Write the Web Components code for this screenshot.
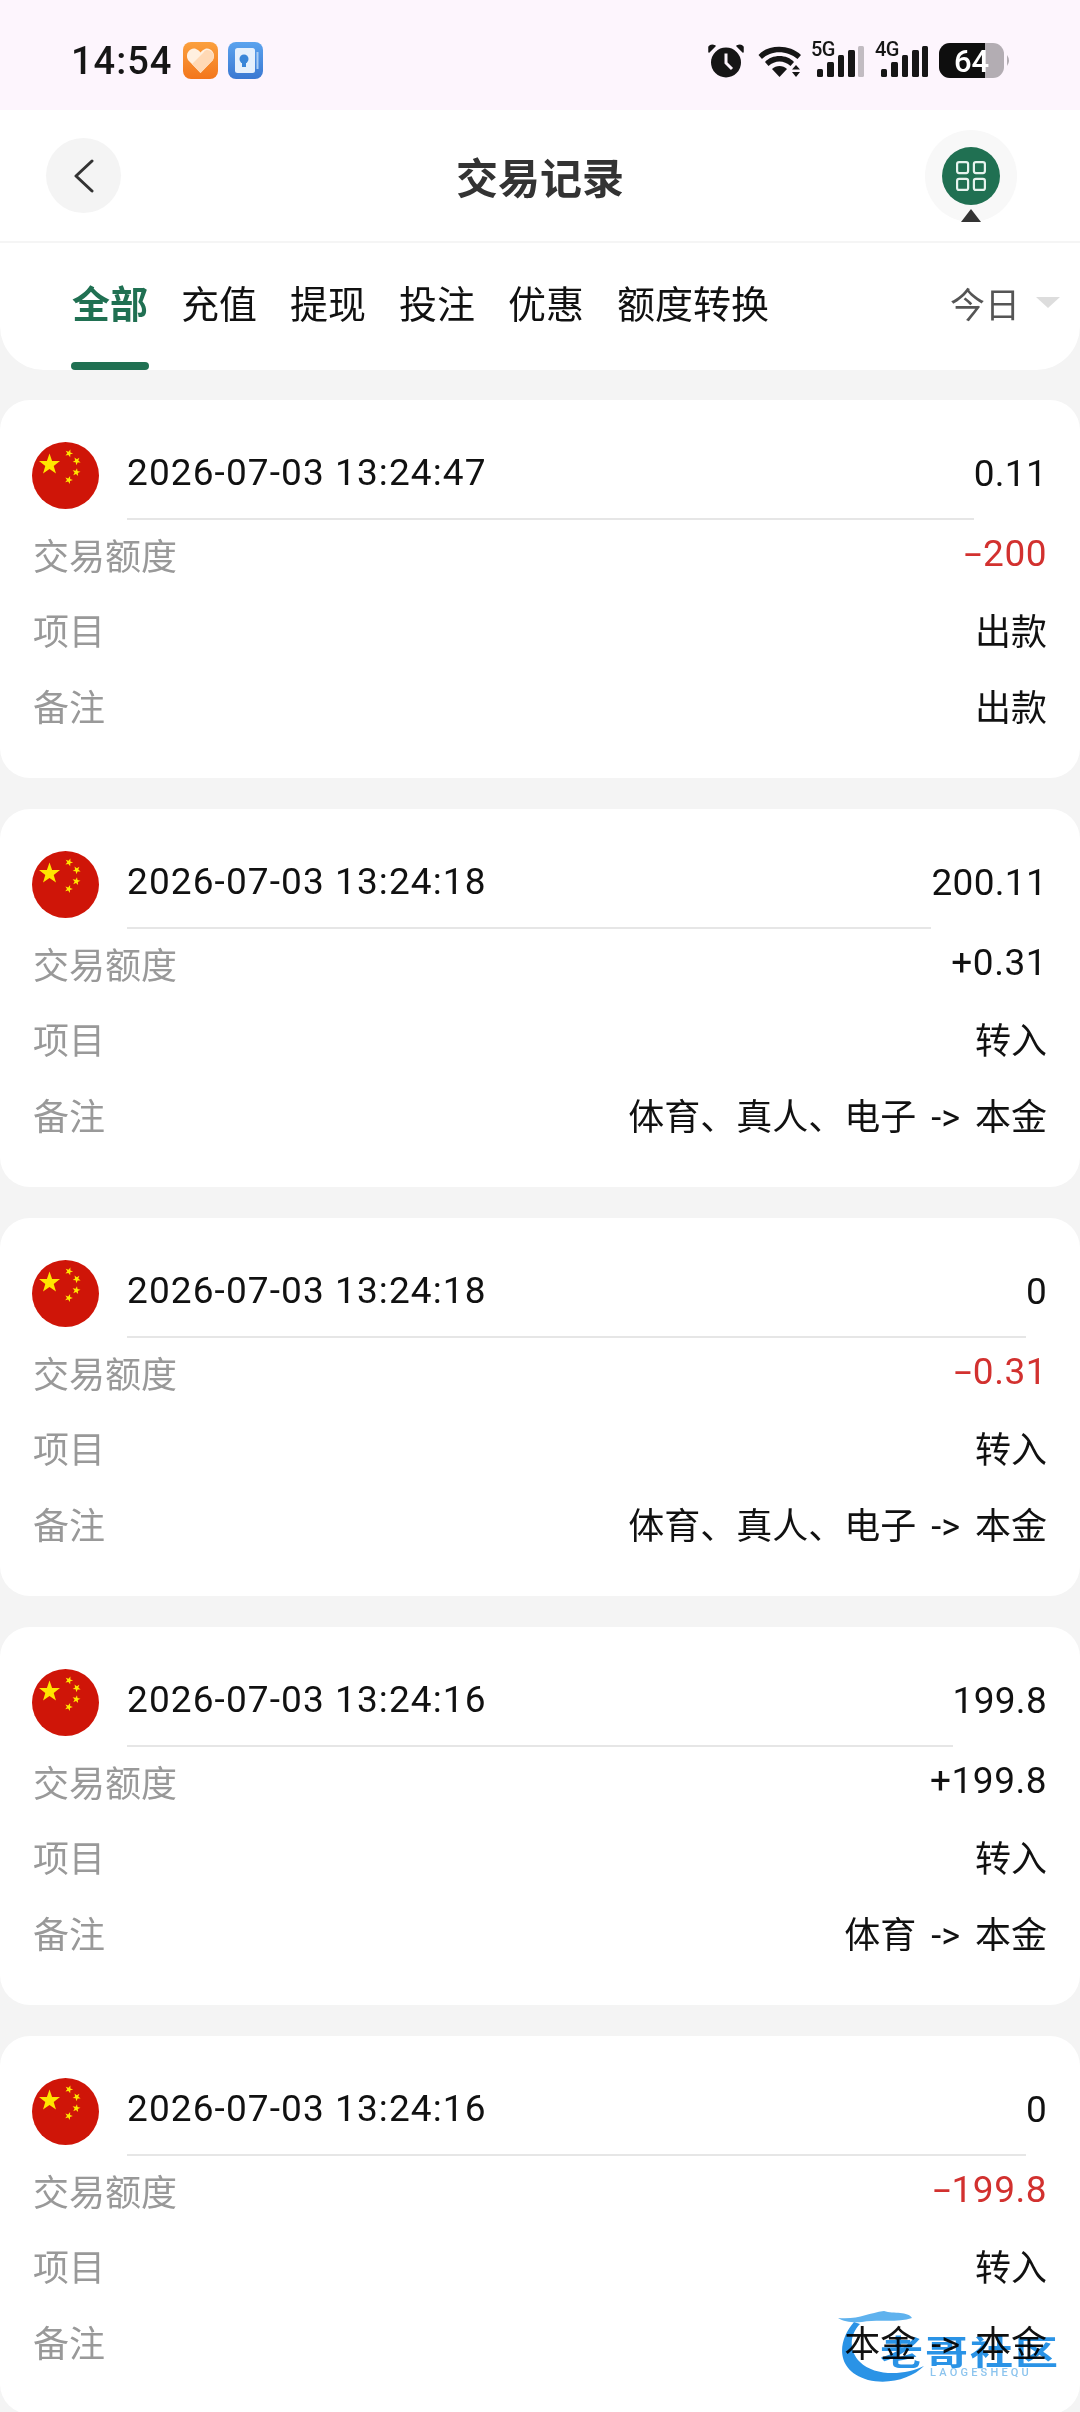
<!DOCTYPE html>
<html lang="zh">
<head>
<meta charset="utf-8">
<title>交易记录</title>
<style>
  html, body { margin: 0; padding: 0; }
  body {
    width: 1080px;
    height: 2412px;
    overflow: hidden;
    background: #f4f4f4;
    font-family: Roboto, "Noto Sans CJK SC", sans-serif;
  }
</style>
</head>
<body>
<status-bar></status-bar>
<app-header>交易记录</app-header>
<tab-bar></tab-bar>
<record-list>
  <record-card time="2026-07-03 13:24:47" balance="0.11" amount="-200" kind="neg" item="出款" note="出款"></record-card>
  <record-card time="2026-07-03 13:24:18" balance="200.11" amount="+0.31" item="转入" note="体育、真人、电子 -&gt; 本金"></record-card>
  <record-card time="2026-07-03 13:24:18" balance="0" amount="-0.31" kind="neg" item="转入" note="体育、真人、电子 -&gt; 本金"></record-card>
  <record-card time="2026-07-03 13:24:16" balance="199.8" amount="+199.8" item="转入" note="体育 -&gt; 本金"></record-card>
  <record-card time="2026-07-03 13:24:16" balance="0" amount="-199.8" kind="neg" item="转入" note="本金 -&gt; 本金"></record-card>
</record-list>
<water-mark></water-mark>

<script>
class StatusBar extends HTMLElement {
  constructor() {
    super();
    this.shadowDOM = this.attachShadow({mode: 'open'});
    const bars = (last) => `
      <svg width="53" height="36" viewBox="0 0 53 36">
        <rect x="6" y="26" width="6" height="8" rx="1.500" fill="#161616"/><rect x="16" y="19" width="7" height="15" rx="1.500" fill="#161616"/><rect x="27" y="12" width="6" height="22" rx="1.500" fill="#161616"/><rect x="37" y="7" width="7" height="27" rx="1.500" fill="#161616"/><rect x="47" y="3" width="6" height="31" rx="1.500" fill="${last}"/>
      </svg>`;
    this.shadowDOM.innerHTML = `
      <style>
        :host {
          display: flex;
          align-items: center;
          height: 110px;
          padding: 11px 69px 0 71px;
          box-sizing: border-box;
          background: #fdf5fd;
          color: #161616;
        }
        .time { font: 500 38px/1 Roboto, sans-serif; letter-spacing: 1px; margin-right: 11px; }
        .apps { display: flex; gap: 10px; }
        .right { margin-left: auto; display: flex; align-items: center; }
        svg { display: block; }
        .net { position: relative; width: 53px; height: 36px; margin-right: 11px; }
        .net b { position: absolute; left: 0; top: -4px; font: 500 20px/1 Roboto, sans-serif; letter-spacing: -.5px; }
      </style>
      <span class="time">14:54</span>
      <div class="apps">
        <svg width="35" height="37" viewBox="0 0 35 37">
          <defs><linearGradient id="o" x1="0" y1="0" x2="0" y2="1"><stop offset="0" stop-color="#fba03e"/><stop offset="1" stop-color="#f3761c"/></linearGradient></defs>
          <rect width="35" height="37" rx="8" fill="url(#o)"/>
          <path d="M17.500 31 L5 18 C1.500 11 8 5 13 7 C15 7.800 16.500 9 17.500 10.500 C18.500 9 20 7.800 22 7 C27 5 33.500 11 30 18 Z" fill="#fff0e0"/>
          <path d="M17.500 31 L9 22 L21 10 C23 5.500 33.500 9 30 18 Z" fill="#ffd9b5"/>
        </svg>
        <svg width="35" height="37" viewBox="0 0 35 37">
          <defs><linearGradient id="b" x1="0" y1="0" x2="0" y2="1"><stop offset="0" stop-color="#5ba3ee"/><stop offset="1" stop-color="#3a78d2"/></linearGradient></defs>
          <rect width="35" height="37" rx="8" fill="url(#b)"/>
          <rect x="7" y="6" width="20" height="25" rx="2.500" fill="#e6f0fc"/>
          <rect x="28.500" y="10" width="2" height="17" fill="#a9cdf5"/>
          <circle cx="16" cy="17" r="4.500" fill="#3a86d8"/>
          <path d="M14 21h4v4h-4z" fill="#3a86d8"/>
        </svg>
      </div>
      <div class="right">
        <svg width="36" height="34" viewBox="0 0 36 34" style="margin-right:13px">
          <circle cx="18" cy="18.500" r="15" fill="#161616"/>
          <path d="M18 9.500 V19 L24 25" fill="none" stroke="#fdf5fd" stroke-width="3"/>
          <path d="M1 8 L7 2 Q3 0 1 3 Z M35 8 L29 2 Q33 0 35 3 Z" fill="#161616" stroke="#161616" stroke-width="1.500" stroke-linejoin="round"/>
        </svg>
        <svg width="46" height="34" viewBox="0 0 46 34" style="margin-right:8px">
          <path d="M1.500 11 C11 0 33 0 44 11 L40.500 15 C30 6 14 6 5 15 Z" fill="#161616"/>
          <path d="M8 18 C15 10 30 10 37 18 L33.500 22 C27 16 18 16 11.500 22 Z" fill="#161616"/>
          <path d="M15 25 C19 21 26 21 30 25 L22.500 33 Z" fill="#161616"/>
          <path d="M39 21 L43 25.500 H35 Z M39 33 L35 28 H43 Z" fill="#161616"/>
        </svg>
        <div class="net"><b>5G</b>${bars('#c2bcc2')}</div>
        <div class="net"><b>4G</b>${bars('#161616')}</div>
        <svg width="72" height="36" viewBox="0 0 72 36">
          <defs><clipPath id="bat"><rect width="65" height="35" rx="11"/></clipPath></defs>
          <g clip-path="url(#bat)"><rect width="65" height="35" fill="#b3adb3"/><rect width="46" height="35" fill="#0e0e0e"/></g>
          <path d="M68 12 Q72 17.500 68 23 Z" fill="#b3adb3"/>
          <text x="15" y="29" font-family="Roboto, sans-serif" font-size="31" font-weight="500" fill="#fff">64</text>
        </svg>
      </div>
    `;
  }
}

class AppHeader extends HTMLElement {
  constructor() {
    super();
    this.shadowDOM = this.attachShadow({mode: 'open'});
    this.shadowDOM.innerHTML = `
      <style>
        :host {
          display: grid;
          grid-template-columns: 1fr auto 1fr;
          align-items: center;
          height: 133px;
          padding: 0 46px;
          box-sizing: border-box;
          background: #fff;
          border-bottom: 2px solid #f5f5f5;
        }
        .back {
          width: 75px;
          height: 75px;
          border-radius: 50%;
          background: #f4f4f4;
          display: flex;
          align-items: center;
          justify-content: center;
        }
        h1 {
          margin: 0;
          font: 700 42px/1 "Noto Sans CJK SC", sans-serif;
          color: #333;
        }
        .menu {
          justify-self: end;
          margin-right: 17px;
          position: relative;
          width: 92px;
          height: 92px;
          border-radius: 50%;
          background: #f8f8f8;
          display: flex;
          align-items: center;
          justify-content: center;
        }
        .dot {
          width: 58px;
          height: 58px;
          border-radius: 50%;
          background: #207052;
          display: flex;
          align-items: center;
          justify-content: center;
        }
        .arrow {
          position: absolute;
          left: 36px;
          bottom: 0;
          width: 0;
          height: 0;
          border: 10px solid transparent;
          border-top: 0;
          border-bottom: 13px solid #333;
        }
      </style>
      <div class="back">
        <svg width="22" height="34" viewBox="0 0 22 34"><path d="M19 2 L3 17 L19 32" fill="none" stroke="#333" stroke-width="3" stroke-linecap="round" stroke-linejoin="round"/></svg>
      </div>
      <h1><slot></slot></h1>
      <div class="menu">
        <div class="dot">
          <svg width="30" height="30" viewBox="0 0 30 30" fill="none" stroke="#e6f3ee" stroke-width="2.200">
            <rect x="1.100" y="1.100" width="11" height="11" rx="2"/><rect x="17.900" y="1.100" width="11" height="11" rx="2"/>
            <rect x="1.100" y="17.900" width="11" height="11" rx="2"/><rect x="17.900" y="17.900" width="11" height="11" rx="2"/>
          </svg>
        </div>
        <i class="arrow"></i>
      </div>
    `;
  }
}

class TabBar extends HTMLElement {
  constructor() {
    super();
    this.shadowDOM = this.attachShadow({mode: 'open'});
    const tabs = ['全部', '充值', '提现', '投注', '优惠', '额度转换'];
    this.shadowDOM.innerHTML = `
      <style>
        :host {
          display: flex;
          align-items: stretch;
          height: 127px;
          padding: 0 20px 0 72px;
          box-sizing: border-box;
          background: #fff;
          border-radius: 0 0 44px 44px;
          font-family: "Noto Sans CJK SC", sans-serif;
        }
        .tabs { display: flex; gap: 33px; }
        .tab {
          position: relative;
          font-size: 38px;
          line-height: 1;
          color: #111;
          padding-top: 40px;
        }
        .tab.on { color: #207052; font-weight: 700; }
        .tab.on::after {
          content: "";
          position: absolute;
          left: -1px;
          right: -1px;
          bottom: 0;
          height: 8px;
          border-radius: 4px;
          background: #207052;
        }
        .range {
          margin-left: auto;
          display: flex;
          align-items: center;
          gap: 16px;
          height: 118px;
          font-size: 35px;
          color: #555;
        }
        .range i {
          width: 0;
          height: 0;
          border: 12px solid transparent;
          border-bottom: 0;
          border-top: 11px solid #ddd;
        }
      </style>
      <div class="tabs">
        ${tabs.map((t, i) => `<span class="tab${i === 0 ? ' on' : ''}">${t}</span>`).join('')}
      </div>
      <div class="range">今日<i></i></div>
    `;
  }
}

class RecordList extends HTMLElement {
  constructor() {
    super();
    this.shadowDOM = this.attachShadow({mode: 'open'});
    this.shadowDOM.innerHTML = `
      <style>
        :host {
          display: flex;
          flex-direction: column;
          gap: 31px;
          padding-top: 30px;
        }
      </style>
      <slot></slot>
    `;
  }
}

// five point star around cx,cy, for the flag
const star = (cx, cy, r, rot) => {
  const pts = [];
  for (let i = 0; i < 10; i++) {
    const a = (rot + i * 36 - 90) * Math.PI / 180;
    const d = i % 2 ? r * 0.4 : r;
    pts.push((cx + d * Math.cos(a)).toFixed(1) + ',' + (cy + d * Math.sin(a)).toFixed(1));
  }
  return `<polygon points="${pts.join(' ')}"/>`;
};

class RecordCard extends HTMLElement {
  constructor() {
    super();
    this.shadowDOM = this.attachShadow({mode: 'open'});
  }

  connectedCallback() {
    const get = (n) => (this.getAttribute(n) || '').replace('->', '-&gt;');
    const neg = this.getAttribute('kind') === 'neg';
    const amount = neg ? `<i class="sign">-</i>${get('amount').slice(1)}` : get('amount');
    this.shadowDOM.innerHTML = `
      <style>
        :host {
          display: block;
          height: 378px;
          padding: 42px 33px 0 32px;
          box-sizing: border-box;
          background: #fff;
          border-radius: 30px;
          font-family: Roboto, "Noto Sans CJK SC", sans-serif;
        }
        .top { display: flex; align-items: flex-start; height: 74px; }
        .top svg { flex: none; margin-right: 28px; display: block; }
        .mid {
          flex: 1;
          height: 78px;
          font-size: 37px;
          line-height: 62px;
          letter-spacing: 1.100px;
          color: #111;
          border-bottom: 2px solid #e6e6e6;
          box-sizing: border-box;
        }
        .bal { font-size: 37px; line-height: 64px; letter-spacing: .3px; color: #111; }
        .row {
          display: flex;
          justify-content: space-between;
          align-items: center;
          height: 75.500px;
          font-size: 36px;
          color: #111;
        }
        .row span:first-child { color: #999; margin-left: 1px; }
        .row span:last-child { word-spacing: 6px; }
        .amt { font-size: 37px; letter-spacing: .5px; }
        .neg { color: #d2312f; }
        .sign { display: inline-block; font-style: normal; transform: scaleX(1.7); margin: 0 4px; }
      </style>
      <div class="top">
        <svg width="67" height="67" viewBox="0 0 67 67">
          <circle cx="33.500" cy="33.500" r="33.500" fill="#cf1508"/>
          <g fill="#ffe600">
            ${star(17.500, 22.500, 11, 0)}${star(37, 11.300, 4.200, 20)}${star(44.700, 19, 4.200, 40)}${star(44.300, 30.300, 4.200, 10)}${star(36.700, 38, 4.200, 20)}
          </g>
        </svg>
        <div class="mid">${get('time')}</div>
        <div class="bal">${get('balance')}</div>
      </div>
      <div class="row"><span>交易额度</span><span class="amt ${neg ? 'neg' : ''}">${amount}</span></div>
      <div class="row"><span>项目</span><span>${get('item')}</span></div>
      <div class="row"><span>备注</span><span>${get('note')}</span></div>
    `;
  }
}

class WaterMark extends HTMLElement {
  constructor() {
    super();
    this.shadowDOM = this.attachShadow({mode: 'open'});
    this.shadowDOM.innerHTML = `
      <style>
        :host {
          position: absolute;
          left: 838px;
          top: 2310px;
          width: 226px;
          height: 76px;
          pointer-events: none;
          mix-blend-mode: multiply;
        }
        svg { position: absolute; left: 0; top: 0; filter: blur(.6px); }
        .cn {
          position: absolute;
          left: 42px;
          top: 19px;
          font: 700 43px/1 "Noto Sans CJK SC", sans-serif;
          letter-spacing: 2px;
          color: #2a93e6;
          white-space: nowrap;
          transform: scaleY(.78);
          filter: blur(.7px);
        }
        .en {
          position: absolute;
          left: 92px;
          top: 57px;
          font: 500 11px/1 Roboto, sans-serif;
          letter-spacing: 3.200px;
          color: #8cc4ee;
          white-space: nowrap;
        }
      </style>
      <svg width="226" height="76" viewBox="0 0 226 76">
        <path d="M16 12 C0 30 -4 60 30 70 C52 75 74 68 86 56 C66 66 36 66 22 52 C10 40 12 24 22 14 Z" fill="#2a93e6"/>
        <path d="M0 8 C20 10 30 3 46 1 C56 4 70 1 74 8 C60 13 40 9 24 12 C16 13 6 12 0 8 Z" fill="#5fb2ee"/>
      </svg>
      <span class="cn">老哥社区</span>
      <span class="en">LAOGESHEQU</span>
    `;
  }
}

customElements.define('status-bar', StatusBar);
customElements.define('app-header', AppHeader);
customElements.define('tab-bar', TabBar);
customElements.define('record-list', RecordList);
customElements.define('record-card', RecordCard);
customElements.define('water-mark', WaterMark);
</script>
</body>
</html>
